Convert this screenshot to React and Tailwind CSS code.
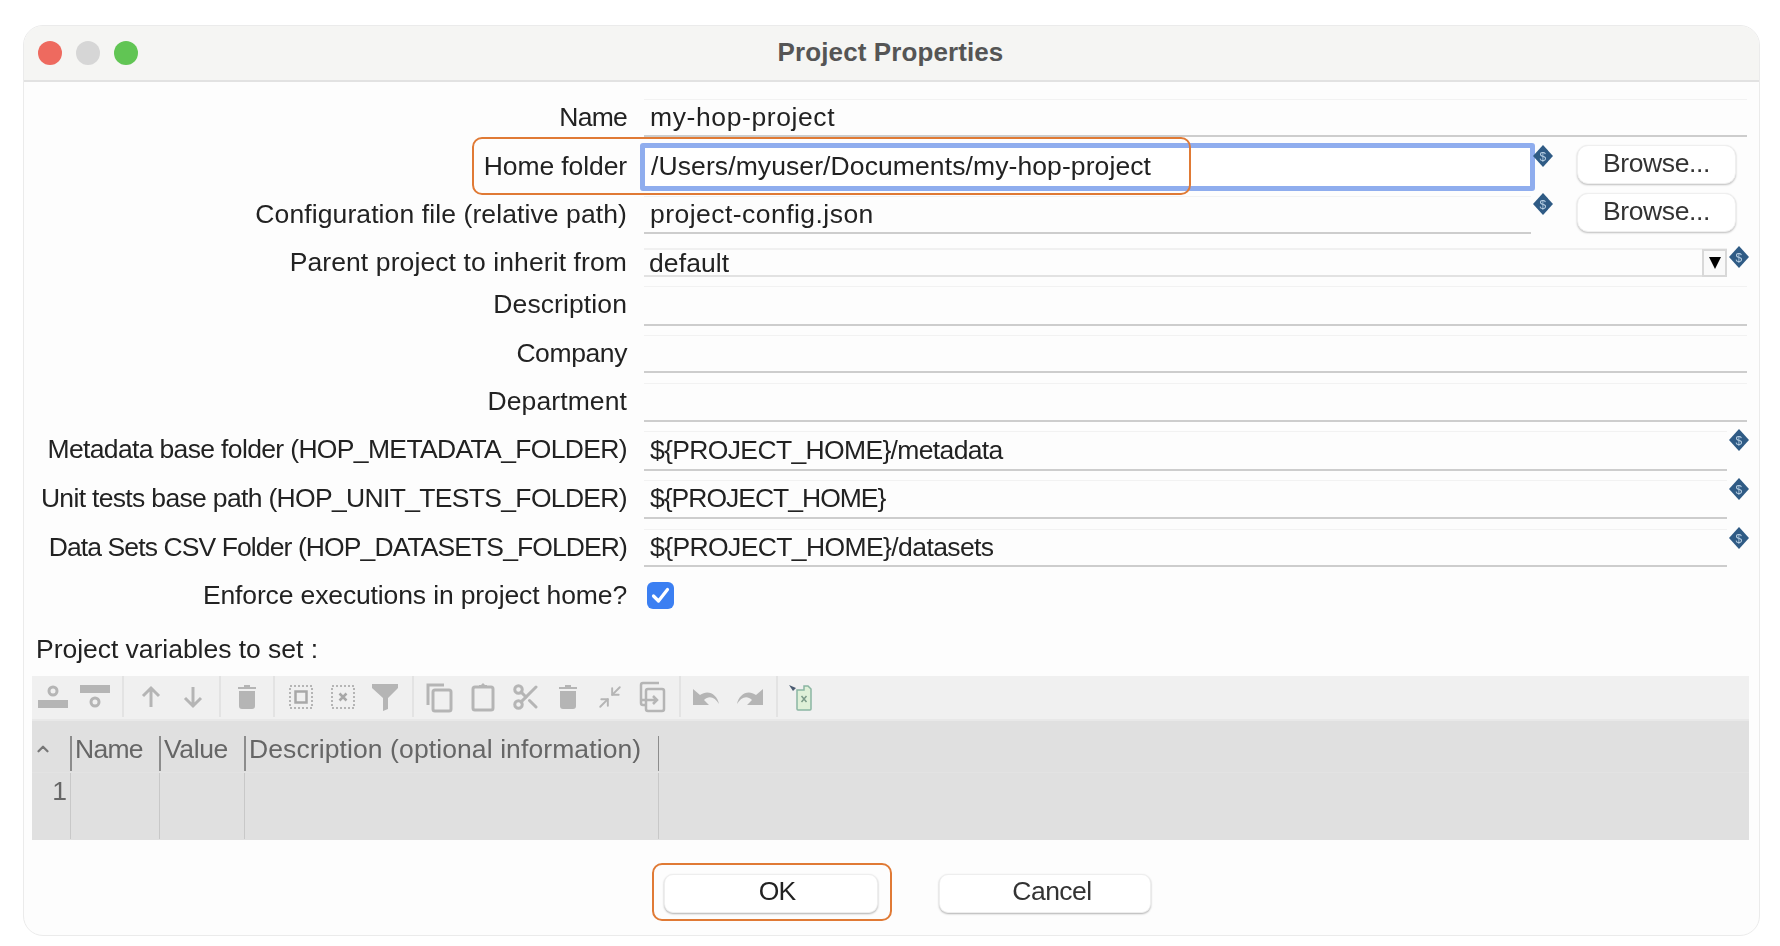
import React from 'react'
import { Scissors, Minimize2, ChevronUp } from 'lucide-react'

const G = '#b5b5b5'

function Diamond({ className = '' }) {
  return (
    <svg width="22" height="24" viewBox="0 0 22 24" className={`shrink-0 ${className}`}>
      <path d="M11 1L21 12L11 23L1 12Z" fill="#2f5b85" />
      <text x="11" y="16.5" textAnchor="middle" fontSize="12" fill="#b8cfe3" fontFamily="Liberation Sans">$</text>
    </svg>
  )
}

function Label({ children, className = '' }) {
  return <div className={`w-[603px] mr-[17px] shrink-0 text-right leading-[37px] whitespace-nowrap ${className}`}>{children}</div>
}

function Field({ children, className = '' }) {
  return (
    <div className={`h-full flex items-center pl-[6px] bg-[#fdfdfd] border-t border-[#f2f2f2] border-b-2 border-b-[#cdcdcd] ${className}`}>
      {children}
    </div>
  )
}

function BrowseButton({ className = '' }) {
  return (
    <button className={`w-[159px] h-[39px] ml-[23px] pb-[3px] shrink-0 rounded-[11px] bg-white border border-[#efefef] shadow-[0_1px_2px_rgba(0,0,0,0.25)] text-[#333] leading-none tracking-[-0.4px] ${className}`}>
      Browse...
    </button>
  )
}

function Ico({ children, w = 'w-[42px]' }) {
  return <div className={`${w} h-full flex items-center justify-center shrink-0`}>{children}</div>
}

function Svg({ children }) {
  return <svg width="32" height="32" viewBox="0 0 32 32" fill="none">{children}</svg>
}

function Toolbar() {
  return (
    <div className="ml-[8px] w-[1717px] h-[45px] bg-[#f0f0f0] border-b-2 border-[#e8e8e8] flex pb-[2px] blur-[0.5px]">
      <div className="w-[92px] flex border-r-2 border-[#e3e3e3]">
        <Ico>
          <Svg>
            <circle cx="16" cy="10" r="4" stroke={G} strokeWidth="3" />
            <rect x="1" y="19" width="30" height="8" fill={G} />
          </Svg>
        </Ico>
        <Ico>
          <Svg>
            <rect x="1" y="4" width="30" height="8" fill={G} />
            <circle cx="16" cy="21" r="4" stroke={G} strokeWidth="3" />
          </Svg>
        </Ico>
      </div>
      <div className="w-[97px] pl-[6px] flex border-r-2 border-[#e3e3e3]">
        <Ico>
          <Svg>
            <path d="M16 26V7M8 15L16 7L24 15" stroke={G} strokeWidth="3" />
          </Svg>
        </Ico>
        <Ico>
          <Svg>
            <path d="M16 6V25M8 17L16 25L24 17" stroke={G} strokeWidth="3" />
          </Svg>
        </Ico>
      </div>
      <div className="w-[54px] flex justify-center border-r-2 border-[#e3e3e3]">
        <Ico>
          <Svg>
            <path d="M7 6H25V8H7ZM13 4H19V6H13ZM8 10H24V25Q24 28 21 28H11Q8 28 8 25Z" fill={G} />
          </Svg>
        </Ico>
      </div>
      <div className="w-[139px] pl-[5px] flex border-r-2 border-[#e3e3e3]">
        <Ico>
          <Svg>
            <rect x="5" y="5" width="22" height="22" stroke={G} strokeWidth="2" strokeDasharray="2 2" />
            <rect x="10.5" y="10.5" width="11" height="11" stroke="#a8a8a8" strokeWidth="2.5" />
          </Svg>
        </Ico>
        <Ico>
          <Svg>
            <rect x="5" y="5" width="22" height="22" stroke={G} strokeWidth="2" strokeDasharray="2 2" />
            <path d="M12.5 12.5L19.5 19.5M19.5 12.5L12.5 19.5" stroke="#a8a8a8" strokeWidth="2.5" />
          </Svg>
        </Ico>
        <Ico>
          <Svg>
            <path d="M3 3H29V7L19 17V28L14 30V17L3 7Z" fill={G} />
          </Svg>
        </Ico>
      </div>
      <div className="w-[267px] pl-[4px] flex border-r-2 border-[#e3e3e3]">
        <Ico w="w-[43px]">
          <Svg>
            <path d="M4 24V4H20" stroke={G} strokeWidth="3" />
            <rect x="9" y="9" width="18" height="21" rx="2" stroke={G} strokeWidth="3" />
          </Svg>
        </Ico>
        <Ico w="w-[43px]">
          <Svg>
            <rect x="6" y="6" width="20" height="23" rx="2" stroke={G} strokeWidth="3" />
            <path d="M12 7V4H14L16 2L18 4H20V7Z" fill={G} />
          </Svg>
        </Ico>
        <Ico w="w-[43px]">
          <Scissors size={30} color={G} strokeWidth={2.4} />
        </Ico>
        <Ico w="w-[42px]">
          <Svg>
            <path d="M7 6H25V8H7ZM13 4H19V6H13ZM8 10H24V25Q24 28 21 28H11Q8 28 8 25Z" fill={G} />
          </Svg>
        </Ico>
        <Ico w="w-[42px]">
          <Minimize2 size={26} color={G} strokeWidth={1.8} />
        </Ico>
        <Ico w="w-[43px]">
          <Svg>
            <path d="M9 24H6Q4 24 4 22V4Q4 2 6 2H22" stroke={G} strokeWidth="2.5" />
            <rect x="9" y="8" width="18" height="22" rx="2" stroke={G} strokeWidth="2.5" />
            <path d="M5 19H20M16 15L20 19L16 23" stroke={G} strokeWidth="2.5" />
          </Svg>
        </Ico>
      </div>
      <div className="w-[97px] pl-[3px] flex border-r-2 border-[#e3e3e3]">
        <Ico w="w-[44px]">
          <Svg>
            <path d="M3 8V24H19L14 19C19 14 25 16 29 23C27 13 18 8 10 14Z" fill={G} />
          </Svg>
        </Ico>
        <Ico w="w-[44px]">
          <Svg>
            <path d="M29 8V24H13L18 19C13 14 7 16 3 23C5 13 14 8 22 14Z" fill={G} />
          </Svg>
        </Ico>
      </div>
      <div className="pl-[4px] flex">
        <Ico>
          <Svg>
            <path d="M2 4L9 7L6 10Z" fill="#4a5a70" />
            <path d="M10 9H17V5H21L24 8V28Q24 29 23 29H11Q10 29 10 28Z" fill="#dff0d8" stroke="#8bb5a2" strokeWidth="1.5" />
            <path d="M14.5 15L19.5 21M19.5 15L14.5 21" stroke="#7b9a88" strokeWidth="1.5" />
          </Svg>
        </Ico>
      </div>
    </div>
  )
}

function VariablesTable() {
  return (
    <div className="ml-[8px] w-[1717px] h-[119px] bg-[#e0e0e0] text-[#666] blur-[0.3px]">
      <div className="h-[52px] flex items-start border-b border-[#e3e3e3]">
        <div className="w-[38px] h-full flex items-center pl-[2px] pt-[4px]">
          <ChevronUp size={18} strokeWidth={3} color="#777" />
        </div>
        <div className="w-[89px] h-[35px] mt-[15px] pl-[3px] border-l-2 border-[#8c8c8c] leading-[27px] tracking-[-0.75px]">Name</div>
        <div className="w-[85px] h-[35px] mt-[15px] pl-[3px] border-l-2 border-[#8c8c8c] leading-[27px] tracking-[-0.4px]">Value</div>
        <div className="w-[414px] h-[35px] mt-[15px] pl-[3px] border-l-2 border-[#8c8c8c] leading-[27px] whitespace-nowrap">Description (optional information)</div>
        <div className="h-[35px] mt-[15px] border-l border-[#8c8c8c]"></div>
      </div>
      <div className="h-[66px] flex">
        <div className="w-[38px] pr-[3px] text-right leading-[36px]">1</div>
        <div className="w-[89px] border-l border-[#c8c8c8]"></div>
        <div className="w-[85px] border-l border-[#c8c8c8]"></div>
        <div className="w-[414px] border-l border-[#c8c8c8]"></div>
        <div className="border-l border-[#c8c8c8]"></div>
      </div>
    </div>
  )
}

export default function App() {
  return (
    <div className="min-h-screen bg-white pt-[25px] pl-[23px] font-['Liberation_Sans',sans-serif] text-[26.5px] tracking-[0.1px] text-[#222]">
      <div className="relative w-[1737px] h-[911px] rounded-[20px] border border-[#ebebeb] bg-[#fdfdfd] overflow-hidden blur-[0.4px]">
        <div className="relative h-[56px] flex items-center justify-center bg-[#f5f5f3] border-b-2 border-[#e2e2e2]">
          <div className="absolute left-[14px] flex gap-[14px]">
            <div className="w-[24px] h-[24px] rounded-full bg-[#ee6a5f]"></div>
            <div className="w-[24px] h-[24px] rounded-full bg-[#d6d6d6]"></div>
            <div className="w-[24px] h-[24px] rounded-full bg-[#61c554]"></div>
          </div>
          <div className="font-bold text-[26px] text-[#555] -mt-[1px] -ml-[2px]">Project Properties</div>
        </div>

        <div className="flex mt-[17px] h-[38px]">
          <Label className="tracking-[-0.75px]">Name</Label>
          <Field className="w-[1103px] tracking-[0.6px]">my-hop-project</Field>
        </div>

        <div className="flex items-start mt-[6px] h-[48px]">
          <Label className="tracking-[-0.1px]"><span className="block leading-[46px]">Home folder</span></Label>
          <div className="w-[895px] h-full -ml-[4px] pl-[6px] flex items-center bg-white border-[5px] border-[#8fadee] rounded-[3px]">
            /Users/myuser/Documents/my-hop-project
          </div>
          <Diamond className="-ml-[3px] mt-[1px]" />
          <BrowseButton className="mt-[2px]" />
        </div>

        <div className="flex items-start mt-[5px] h-[38px]">
          <Label>Configuration file (relative path)</Label>
          <Field className="w-[887px] tracking-[0.46px]">project-config.json</Field>
          <Diamond className="ml-[1px] -mt-[4px]" />
          <BrowseButton className="-mt-[3px]" />
        </div>

        <div className="flex items-start mt-[14px] h-[29px]">
          <Label><span className="block leading-[29px]">Parent project to inherit from</span></Label>
          <div className="w-[1083px] h-full pl-[5px] flex items-center justify-between bg-[#fdfdfd] border-t-2 border-[#f0f0f0] border-b-2 border-b-[#e2e2e2]">
            <span className="pt-[3px]">default</span>
            <div className="w-[25px] h-[28px] flex items-center justify-center bg-[#f9f9f9] border-2 border-[#d8d8d8]">
              <span className="w-0 h-0 border-x-[6px] border-x-transparent border-t-[12px] border-t-black"></span>
            </div>
          </div>
          <Diamond className="ml-[1px] -mt-[3px]" />
        </div>

        <div className="flex mt-[9px] h-[40px]">
          <Label>Description</Label>
          <Field className="w-[1103px]" />
        </div>
        <div className="flex mt-[9px] h-[38px]">
          <Label className="tracking-[-0.4px]">Company</Label>
          <Field className="w-[1103px]" />
        </div>
        <div className="flex mt-[10px] h-[39px]">
          <Label>Department</Label>
          <Field className="w-[1103px]" />
        </div>

        <div className="flex items-start mt-[9px] h-[40px]">
          <Label className="tracking-[-0.65px]">Metadata base folder (HOP_METADATA_FOLDER)</Label>
          <Field className="w-[1083px] tracking-[-0.65px]">{'${PROJECT_HOME}/metadata'}</Field>
          <Diamond className="ml-[1px] -mt-[3px]" />
        </div>
        <div className="flex items-start mt-[9px] h-[39px]">
          <Label className="tracking-[-0.67px]">Unit tests base path (HOP_UNIT_TESTS_FOLDER)</Label>
          <Field className="w-[1083px] tracking-[-1px]">{'${PROJECT_HOME}'}</Field>
          <Diamond className="ml-[1px] -mt-[3px]" />
        </div>
        <div className="flex items-start mt-[10px] h-[38px]">
          <Label className="tracking-[-0.9px]">Data Sets CSV Folder (HOP_DATASETS_FOLDER)</Label>
          <Field className="w-[1083px] tracking-[-0.6px]">{'${PROJECT_HOME}/datasets'}</Field>
          <Diamond className="ml-[1px] -mt-[3px]" />
        </div>

        <div className="flex items-center mt-[15px] h-[27px]">
          <Label className="tracking-[-0.13px]">Enforce executions in project home?</Label>
          <div className="ml-[3px] w-[27px] h-[27px] rounded-[6px] bg-[#3b7ff2] flex items-center justify-center">
            <svg width="19" height="17" viewBox="0 0 19 17" fill="none">
              <path d="M2.5 9L7.5 14L16.5 2.5" stroke="white" strokeWidth="3.2" strokeLinecap="round" strokeLinejoin="round" />
            </svg>
          </div>
        </div>

        <div className="mt-[25px] pl-[12px] leading-[30px] tracking-[-0.03px]">Project variables to set :</div>

        <div className="mt-[12px]">
          <Toolbar />
          <VariablesTable />
        </div>

        <div className="flex mt-[34px] pl-[640px]">
          <button className="w-[214px] h-[39px] pl-[12px] pb-[4px] rounded-[9px] bg-white border border-[#eeeeee] shadow-[0_1px_2px_rgba(0,0,0,0.3)] leading-none tracking-[-1px]">OK</button>
          <button className="w-[212px] h-[39px] ml-[61px] pl-[14px] pb-[4px] rounded-[9px] bg-white border border-[#eeeeee] shadow-[0_1px_2px_rgba(0,0,0,0.3)] text-[#333] leading-none tracking-[-0.5px]">Cancel</button>
        </div>

        <div className="absolute left-[448px] top-[111px] w-[719px] h-[58px] rounded-[10px] border-2 border-[#e07a35]"></div>
        <div className="absolute left-[628px] top-[837px] w-[240px] h-[58px] rounded-[10px] border-2 border-[#e07a35]"></div>
      </div>
    </div>
  )
}
